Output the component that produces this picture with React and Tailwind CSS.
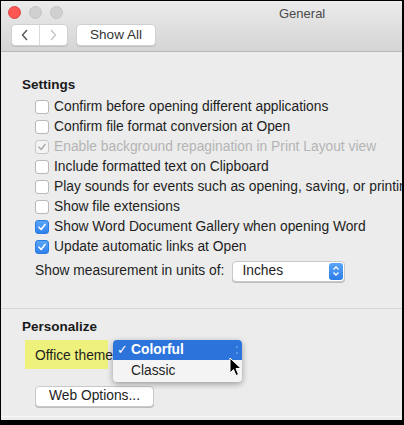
import React from "react";

function Check({ checked, disabled }) {
  if (checked) {
    return (
      <span
        className={`flex h-[14px] w-[14px] shrink-0 items-center justify-center rounded-[3px] ${
          disabled ? "border border-[#c8c8c8] bg-[#f4f4f4]" : "bg-gradient-to-b from-[#5aa6f8] to-[#2f80ed] border border-[#2b7be0]"
        }`}
      >
        <svg width="10" height="10" viewBox="0 0 10 10">
          <path
            d="M2 5.2 L4.2 7.5 L8 2.5"
            fill="none"
            stroke={disabled ? "#b0b0b0" : "#ffffff"}
            strokeWidth="1.6"
            strokeLinecap="round"
            strokeLinejoin="round"
          />
        </svg>
      </span>
    );
  }
  return (
    <span className="h-[14px] w-[14px] shrink-0 rounded-[3px] border border-[#b9b9b9] bg-white shadow-[inset_0_1px_0_#fff]" />
  );
}

const rows = [
  { t: "Confirm before opening different applications" },
  { t: "Confirm file format conversion at Open" },
  { t: "Enable background repagination in Print Layout view", c: true, d: true },
  { t: "Include formatted text on Clipboard" },
  { t: "Play sounds for events such as opening, saving, or printing" },
  { t: "Show file extensions" },
  { t: "Show Word Document Gallery when opening Word", c: true },
  { t: "Update automatic links at Open", c: true },
];

export default function App() {
  return (
    <div
      className="relative h-[425px] w-[404px] overflow-hidden bg-black text-[13.8px] text-[#1e1e1e]"
      style={{ fontFamily: '"Liberation Sans", Arial, sans-serif' }}
    >
      <div className="absolute left-[1px] top-[1px] h-[419px] w-[401px] flex flex-col overflow-hidden bg-[#ececec]">
        {/* title + toolbar */}
        <div className="h-[51px] shrink-0 border-b border-[#b8b8b8] bg-gradient-to-b from-[#ebebeb] to-[#d5d5d5] relative">
          <div className="flex items-center gap-[8px] pl-[7px] pt-[5px]">
            <span className="h-[13px] w-[13px] rounded-full bg-[#fc5753] border border-[#df4744]" />
            <span className="h-[13px] w-[13px] rounded-full bg-[#d0d0d0] border border-[#c4c4c4]" />
            <span className="h-[13px] w-[13px] rounded-full bg-[#d0d0d0] border border-[#c4c4c4]" />
          </div>
          <div className="absolute left-[278px] top-[3px] text-[13px] text-[#4a4a4a]">General</div>
          <div className="flex items-center gap-[8px] pl-[10px] pt-[5px]">
            <div className="flex h-[22px] w-[57px] rounded-[4px] bg-white border border-[#d0d0d0] shadow-[0_1px_0_#c2c2c2]">
              <div className="flex w-1/2 items-center justify-center border-r border-[#dadada]">
                <svg width="8" height="12" viewBox="0 0 8 12">
                  <path d="M6 1 L1.5 6 L6 11" fill="none" stroke="#555" strokeWidth="1.4" />
                </svg>
              </div>
              <div className="flex w-1/2 items-center justify-center">
                <svg width="8" height="12" viewBox="0 0 8 12">
                  <path d="M2 1 L6.5 6 L2 11" fill="none" stroke="#c4c4c4" strokeWidth="1.4" />
                </svg>
              </div>
            </div>
            <div className="flex h-[22px] w-[80px] items-center justify-center rounded-[4px] bg-white border border-[#d0d0d0] shadow-[0_1px_0_#c2c2c2] text-[13.5px] text-[#333]">
              Show All
            </div>
          </div>
        </div>

        {/* settings */}
        <div className="pl-[21px] pt-[25px]">
          <div className="font-bold text-[13.5px] leading-[16px] text-[#1a1a1a]">Settings</div>
          <div className="mt-[4px] flex flex-col pl-[13px]">
            {rows.map((r, i) => (
              <div key={i} className="flex h-[20px] items-center gap-[5px] whitespace-nowrap">
                <Check checked={r.c} disabled={r.d} />
                <span className={r.d ? "text-[#b4b4b4]" : ""}>{r.t}</span>
              </div>
            ))}
            <div className="mt-[3px] flex h-[22px] items-center gap-[8px] whitespace-nowrap">
              <span>Show measurement in units of:</span>
              <div className="flex h-[21px] w-[113px] items-center rounded-[4px] border border-[#c9c9c9] bg-white shadow-[0_1px_0_#bdbdbd]">
                <span className="flex-1 pl-[9px]">Inches</span>
                <div className="mr-[1px] flex h-[17px] w-[14px] items-center justify-center rounded-[3px] bg-gradient-to-b from-[#5aa6f8] to-[#2b7ce9]">
                  <svg width="8" height="12" viewBox="0 0 8 12">
                    <path d="M1.5 4.5 L4 2 L6.5 4.5 M1.5 7.5 L4 10 L6.5 7.5" fill="none" stroke="#fff" strokeWidth="1.3" />
                  </svg>
                </div>
              </div>
            </div>
          </div>
        </div>

        <div className="mt-[26px] h-[1px] w-full bg-[#d6d6d6]" />

        {/* personalize */}
        <div className="pl-[21px] pt-[10px]">
          <div className="font-bold text-[13.5px] leading-[16px] text-[#1a1a1a]">Personalize</div>
          <div className="relative mt-[6px] h-[28px]">
            <div className="absolute left-[3px] top-[-1px] h-[29px] w-[83px] bg-[#eef27c]" />
            <span className="absolute left-[13px] top-[5px] whitespace-nowrap">Office theme</span>
            <div className="absolute left-[91px] top-[-1px] w-[129px] rounded-[4px] bg-[#f4f4f4] shadow-[0_2px_6px_rgba(0,0,0,0.35)]">
              <div className="flex h-[20px] items-center rounded-t-[4px] bg-[#2c74dc] pl-[4px] text-white">
                <span className="w-[14px] text-[13px]">✓</span>
                <span className="font-bold">Colorful</span>
              </div>
              <div className="flex h-[22px] items-center pl-[18px]">Classic</div>
              <div className="absolute right-[1px] top-0 flex h-[20px] w-[9px] items-center justify-center rounded-r-[4px] bg-[#2c74dc]">
                <svg width="4" height="12" viewBox="0 0 4 12">
                  <circle cx="2" cy="3" r="0.8" fill="#9cc2f2" />
                  <circle cx="2" cy="9" r="0.8" fill="#9cc2f2" />
                </svg>
              </div>
            </div>
            <svg className="absolute left-[207px] top-[16px]" width="14" height="20" viewBox="0 0 14 20">
              <path d="M1 1 L1 16 L4.5 12.5 L7 18.5 L9.5 17.5 L7 11.5 L12 11.5 Z" fill="#000" stroke="#fff" strokeWidth="1" />
            </svg>
          </div>
          <div className="mt-[17px] ml-[13px] flex h-[21px] w-[119px] items-center justify-center rounded-[4px] border border-[#c9c9c9] bg-white shadow-[0_1px_0_#bdbdbd]">
            Web Options...
          </div>
        </div>
      </div>
      <div className="absolute left-[1px] top-[416px] h-[1px] w-[401px] bg-[#f8f8f8]" />
    </div>
  );
}
